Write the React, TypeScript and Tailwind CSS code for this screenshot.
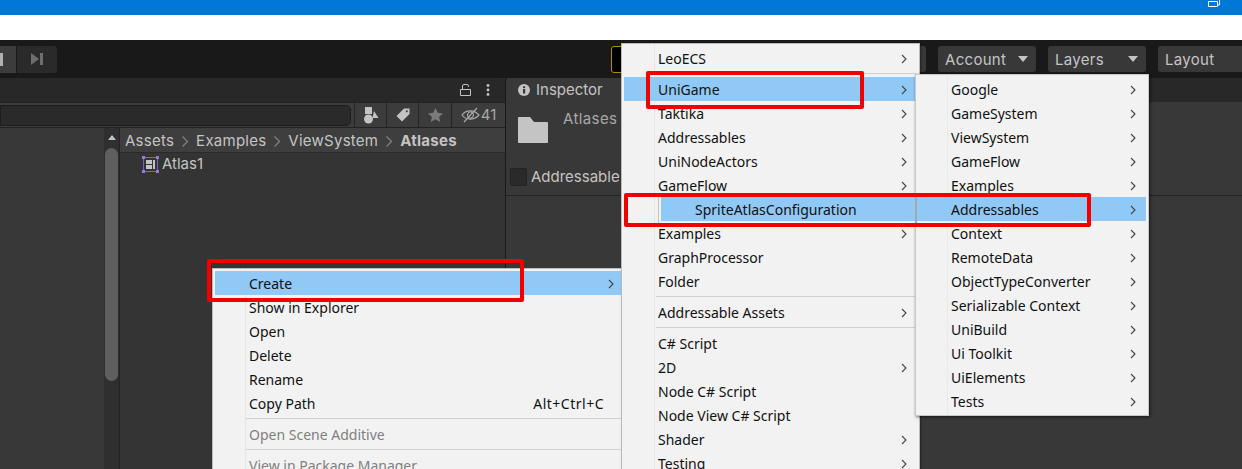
import React from 'react';

const menuFont = "font-['Noto_Sans',sans-serif] text-[14px] text-[#111]";

const Chevron: React.FC = () => (
  <svg width="6" height="10" viewBox="0 0 6 10" className="shrink-0">
    <path d="M1 1l4 4-4 4" fill="none" stroke="#444" strokeWidth="1.1" />
  </svg>
);

const Crumb: React.FC = () => (
  <svg width="8" height="13" viewBox="0 0 8 13" className="shrink-0">
    <path d="M1.500 1.500l5 5-5 5" fill="none" stroke="#808080" strokeWidth="1.300" />
  </svg>
);

type RowProps = {
  label: string;
  arrow?: boolean;
  active?: boolean;
  disabled?: boolean;
  hint?: string;
  textPad: string;
};

const MenuRow: React.FC<RowProps> = ({ label, arrow, active, disabled, hint, textPad }) => (
  <div className={`relative flex h-6 items-center pt-px leading-6 ${textPad} ${active ? 'bg-[#90c8f6]' : ''} ${disabled ? 'text-[#808080]' : ''}`}>
    <span className="whitespace-nowrap">{label}</span>
    <span className="flex-1" />
    {hint && <span className="mr-[10px] whitespace-nowrap tracking-[0.5px]">{hint}</span>}
    {arrow && <Chevron />}
  </div>
);

const Sep: React.FC<{ left: string }> = ({ left }) => (
  <div className={`my-[3px] h-px bg-[#d0d0d0] ${left}`} />
);

const ContextMenu: React.FC = () => (
  <div className={`absolute left-[212px] top-[268px] w-[410px] h-[210px] border border-[#bbb] bg-[#f2f2f2] pt-[2px] pl-[2px] ${menuFont}`}>
    <div className="absolute left-[32px] top-0 bottom-0 w-px bg-[#e6e6e6]" />
    <MenuRow label="Create" arrow active textPad="pl-[34px] pr-[7px]" />
    <MenuRow label="Show in Explorer" textPad="pl-[34px] pr-[7px]" />
    <MenuRow label="Open" textPad="pl-[34px] pr-[7px]" />
    <MenuRow label="Delete" textPad="pl-[34px] pr-[7px]" />
    <MenuRow label="Rename" textPad="pl-[34px] pr-[7px]" />
    <MenuRow label="Copy Path" hint="Alt+Ctrl+C" textPad="pl-[34px] pr-[7px]" />
    <Sep left="ml-[30px]" />
    <MenuRow label="Open Scene Additive" disabled textPad="pl-[34px] pr-[7px]" />
    <Sep left="ml-[30px]" />
    <MenuRow label="View in Package Manager" disabled textPad="pl-[34px] pr-[7px]" />
  </div>
);

const CreateMenu: React.FC = () => (
  <div className={`absolute left-[621px] top-[43px] w-[299px] h-[440px] border border-[#bbb] bg-[#f2f2f2] pt-[2px] pl-[2px] pr-[3px] shadow-[1px_1px_2px_rgba(0,0,0,0.4)] ${menuFont}`}>
    <div className="absolute left-[32px] top-0 bottom-0 w-px bg-[#e6e6e6]" />
    <MenuRow label="LeoECS" arrow textPad="pl-[34px] pr-[9px]" />
    <Sep left="ml-[32px]" />
    <MenuRow label="UniGame" arrow active textPad="pl-[34px] pr-[9px]" />
    <MenuRow label="Taktika" arrow textPad="pl-[34px] pr-[9px]" />
    <MenuRow label="Addressables" arrow textPad="pl-[34px] pr-[9px]" />
    <MenuRow label="UniNodeActors" arrow textPad="pl-[34px] pr-[9px]" />
    <MenuRow label="GameFlow" arrow textPad="pl-[34px] pr-[9px]" />
    {/* this row sits behind the open SpriteAtlasConfiguration submenu */}
    <div className="h-6" />
    <MenuRow label="Examples" arrow textPad="pl-[34px] pr-[9px]" />
    <MenuRow label="GraphProcessor" textPad="pl-[34px] pr-[9px]" />
    <MenuRow label="Folder" textPad="pl-[34px] pr-[9px]" />
    <Sep left="ml-[32px]" />
    <MenuRow label="Addressable Assets" arrow textPad="pl-[34px] pr-[9px]" />
    <Sep left="ml-[32px]" />
    <MenuRow label="C# Script" textPad="pl-[34px] pr-[9px]" />
    <MenuRow label="2D" arrow textPad="pl-[34px] pr-[9px]" />
    <MenuRow label="Node C# Script" textPad="pl-[34px] pr-[9px]" />
    <MenuRow label="Node View C# Script" textPad="pl-[34px] pr-[9px]" />
    <MenuRow label="Shader" arrow textPad="pl-[34px] pr-[9px]" />
    <MenuRow label="Testing" arrow textPad="pl-[34px] pr-[9px]" />
  </div>
);

const UniGameMenu: React.FC = () => (
  <div className={`absolute left-[915px] top-[74px] w-[234px] h-[342px] border border-[#c8c8c8] bg-[#f2f2f2] pt-[2px] pl-px pr-[2px] shadow-[1px_1px_3px_rgba(0,0,0,0.6)] ${menuFont}`}>
    <div className="absolute left-[31px] top-0 bottom-0 w-px bg-[#e9e9e9]" />
    {['Google', 'GameSystem', 'ViewSystem', 'GameFlow', 'Examples', 'Addressables', 'Context', 'RemoteData', 'ObjectTypeConverter', 'Serializable Context', 'UniBuild', 'Ui Toolkit', 'UiElements', 'Tests'].map((name) => (
      <MenuRow key={name} label={name} arrow active={name === 'Addressables'} textPad="pl-[34px] pr-[10px]" />
    ))}
  </div>
);

const AtlasMenu: React.FC = () => (
  <div className={`absolute left-[658px] top-[194px] w-[259px] h-[30px] border-l border-r-2 border-l-[#c4c4c4] border-r-[#a8a8a8] bg-[#f2f2f2] py-[3px] pl-[2px] ${menuFont}`}>
    <MenuRow label="SpriteAtlasConfiguration" active textPad="pl-[34px]" />
  </div>
);

const RedBox: React.FC<{ cls: string }> = ({ cls }) => (
  <div className={`absolute rounded-[2px] border-4 border-[#f00000] ${cls}`} />
);

const TopButton: React.FC<{ label: string; arrow?: boolean; width: string }> = ({ label, arrow, width }) => (
  <div className={`flex h-[26px] items-center justify-between rounded-[3px] bg-[#383838] pl-[7px] pr-[8px] text-[15px] tracking-[0.3px] ${width}`}>
    <span className="pt-[2px]">{label}</span>
    {arrow && <span className="h-0 w-0 border-x-[5px] border-t-[6px] border-x-transparent border-t-[#c4c4c4]" />}
  </div>
);

const ToolButton: React.FC<{ width: string; children: React.ReactNode }> = ({ width, children }) => (
  <div className={`flex h-full items-center justify-center border-l border-[#232323] ${width}`}>{children}</div>
);

const App: React.FC = () => {
  return (
    <div className="relative h-[469px] w-full overflow-hidden bg-[#383838] font-['Inter',sans-serif] text-[15px] text-[#c4c4c4]">
      <div className="flex h-[15px] justify-end bg-[#0078d7] pr-[22px]">
        <svg width="12" height="7" viewBox="0 0 12 7" className="block">
          <path d="M3 -1h8.500v6h-2M0.500 1.500h9v5h-9z" fill="none" stroke="#fff" />
        </svg>
      </div>
      <div className="h-[25px] bg-white" />

      <div className="flex h-[38px] items-center bg-[#191919]">
        <div className="flex h-[27px] w-[57px] overflow-hidden rounded-r-[3px]">
          <div className="flex w-[16px] items-center bg-[#3c3c3c]">
            <div className="h-[13px] w-[3px] bg-[#b0b0b0]" />
          </div>
          <div className="ml-px flex w-[40px] items-center justify-center bg-[#2a2a2a]">
            <svg width="14" height="14" viewBox="0 0 14 14">
              <path d="M1 1l8 6-8 6z" fill="#6e6e6e" />
              <rect x="10" y="1" width="3" height="12" fill="#6e6e6e" />
            </svg>
          </div>
        </div>
        <div className="ml-[554px] h-[27px] w-[20px] rounded-l-[3px] border border-[#b8860b] bg-black" />
        <div className="ml-auto mr-[-4px] flex gap-3">
          <div className="h-[26px] w-[40px] rounded-[3px] bg-[#383838]" />
          <TopButton label="Account" arrow width="w-[98px]" />
          <TopButton label="Layers" arrow width="w-[98px]" />
          <TopButton label="Layout" width="w-[88px]" />
        </div>
      </div>

      <div className="flex h-[391px]">
        <div className="flex w-[506px] flex-col border-r border-[#191919]">
          <div className="flex h-6 items-center justify-end gap-[15px] rounded-tr-[3px] bg-[#282828] pr-[15px]">
            <svg width="11" height="12" viewBox="0 0 11 12">
              <path d="M2.500 5V2a1.500 1.500 0 0 1 1.500-1.500h3a1.500 1.500 0 0 1 1.500 1.500v.8M.5 5.500h10v6h-10z" fill="none" stroke="#c4c4c4" />
            </svg>
            <svg width="4" height="12" viewBox="0 0 4 12">
              <circle cx="2" cy="1.500" r="1.400" fill="#c4c4c4" />
              <circle cx="2" cy="6" r="1.400" fill="#c4c4c4" />
              <circle cx="2" cy="10.500" r="1.400" fill="#c4c4c4" />
            </svg>
          </div>
          <div className="flex h-[26px] items-center border-y border-[#232323] bg-[#3c3c3c]">
            <div className="h-[21px] w-[351px] rounded-r-[5px] border border-[#1d1d1d] bg-[#2a2a2a]" />
            <div className="ml-[3px] flex h-full flex-1">
              <ToolButton width="w-[32px]">
                <svg width="16" height="18" viewBox="0 0 16 18">
                  <rect x="2" y="1" width="7" height="7" fill="#c4c4c4" />
                  <circle cx="5.500" cy="13" r="4.500" fill="#c4c4c4" />
                  <path d="M11 5l4.500 7h-6z" fill="#c4c4c4" />
                </svg>
              </ToolButton>
              <ToolButton width="w-[32px]">
                <svg width="14" height="14" viewBox="0 0 14 14">
                  <path d="M8 0.500h5.500v5.500l-7.500 7.500-5.500-5.500zM10.800 2.200a1 1 0 1 0 .01 0z" fill="#c4c4c4" fillRule="evenodd" />
                </svg>
              </ToolButton>
              <ToolButton width="w-[33px]">
                <svg width="15" height="14" viewBox="0 0 15 14">
                  <path d="M7.500 0l2.200 4.800 5.300.6-3.900 3.600 1.100 5-4.700-2.700-4.700 2.700 1.100-5-3.900-3.600 5.300-.6z" fill="#7a7a7a" />
                </svg>
              </ToolButton>
              <ToolButton width="flex-1">
                <svg width="19" height="16" viewBox="0 0 19 16">
                  <path d="M1 8c4-5.500 12-5.500 17 0c-5 5.500-13 5.500-17 0zM9.500 5a3 3 0 1 0 .01 0zM3 15L16 1" fill="none" stroke="#a8a8a8" strokeWidth="1.200" />
                </svg>
                <span className="ml-px text-[#a8a8a8]">41</span>
              </ToolButton>
            </div>
          </div>
          <div className="flex min-h-0 flex-1">
            <div className="w-[104px]" />
            <div className="flex w-[15px] flex-col items-center bg-[#2f2f2f]">
              <div className="mt-[7px] h-0 w-0 border-x-[4px] border-b-[5px] border-x-transparent border-b-[#c4c4c4]" />
              <div className="mt-[8px] h-[233px] w-[13px] rounded-full bg-[#5f5f5f]" />
            </div>
            <div className="flex-1 border-l border-[#232323] bg-[#343434]">
              <div className="flex h-[25px] items-center gap-[7px] border-b border-[#2a2a2a] bg-[#3e3e3e] pl-[5px] pt-[2px] tracking-[0.25px]">
                <span>Assets</span>
                <Crumb />
                <span>Examples</span>
                <Crumb />
                <span>ViewSystem</span>
                <Crumb />
                <span className="font-bold">Atlases</span>
              </div>
              <div className="flex h-[22px] items-center pl-[22px]">
                <svg width="17" height="17" viewBox="0 0 17 17">
                  <rect x="1.500" y="1.500" width="14" height="14" fill="none" stroke="#8060c8" />
                  <rect x="4" y="4" width="6" height="4" fill="#c4c4c4" />
                  <rect x="4" y="9" width="6" height="4" fill="#c4c4c4" />
                  <rect x="11" y="4" width="2" height="9" fill="#c4c4c4" />
                  <rect x="0" y="0" width="3" height="3" fill="#9a78e0" />
                  <rect x="14" y="0" width="3" height="3" fill="#9a78e0" />
                  <rect x="0" y="14" width="3" height="3" fill="#9a78e0" />
                  <rect x="14" y="14" width="3" height="3" fill="#9a78e0" />
                </svg>
                <span className="ml-[3px]">Atlas1</span>
              </div>
            </div>
          </div>
        </div>

        <div className="flex flex-1 flex-col">
          <div className="flex h-6 bg-[#282828]">
            <div className="flex w-[120px] items-center rounded-t-[3px] bg-[#383838] pl-3">
              <svg width="12" height="12" viewBox="0 0 12 12">
                <circle cx="6" cy="6" r="6" fill="#c4c4c4" />
                <rect x="5" y="5" width="2.200" height="4.500" fill="#383838" />
                <rect x="5" y="2.300" width="2.200" height="1.800" fill="#383838" />
              </svg>
              <span className="ml-[6px]">Inspector</span>
            </div>
          </div>
          <div className="flex h-[94px] flex-col border-b border-[#232323]">
            <div className="flex h-[64px] pl-3 pt-[15px]">
              <svg width="30" height="26" viewBox="0 0 30 26">
                <path d="M1 0h11l4 5h13a1 1 0 0 1 1 1v19a1 1 0 0 1-1 1h-28a1 1 0 0 1-1-1v-24a1 1 0 0 1 1-1z" fill="#c4c4c4" />
              </svg>
              <span className="ml-[15px] mt-[-9px] tracking-[0.4px] text-[#a8a8a8]">Atlases</span>
            </div>
            <div className="flex items-center pl-1">
              <div className="h-[18px] w-[17px] rounded-[2px] border border-[#232323] bg-[#2a2a2a]" />
              <span className="ml-1">Addressable</span>
            </div>
          </div>
        </div>
      </div>

      <ContextMenu />
      <CreateMenu />
      <UniGameMenu />
      <AtlasMenu />

      <RedBox cls="left-[207px] top-[259px] h-[43px] w-[317px]" />
      <RedBox cls="left-[646px] top-[71px] h-[38px] w-[218px]" />
      <RedBox cls="left-[624px] top-[193px] h-[34px] w-[467px]" />
    </div>
  );
};

export default App;
